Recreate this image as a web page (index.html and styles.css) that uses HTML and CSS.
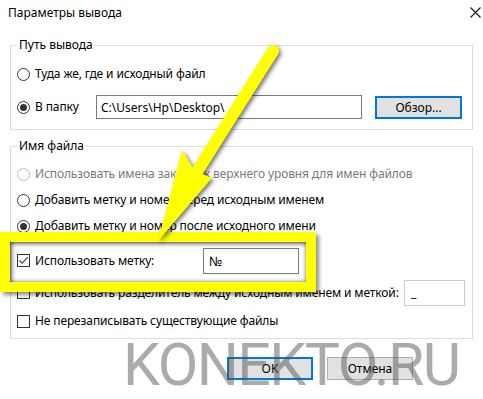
FILE: index.html
```html
<!DOCTYPE html>
<html lang="ru">
<head>
<meta charset="utf-8">
<title>Параметры вывода</title>
<link rel="stylesheet" href="styles.css">
</head>
<body>
<div class="dialog">
  <div class="titlebar">
    <span class="title">Параметры вывода</span>
    <svg class="close" width="11" height="11" viewBox="0 0 11 11"><path d="M0.5 0.5L10.5 10.5M10.5 0.5L0.5 10.5" stroke="#111" stroke-width="1.1" fill="none"/></svg>
  </div>
  <div class="content">
    <fieldset class="group g1">
      <legend>Путь вывода</legend>
      <div class="row r1"><span class="radio"></span><span class="lbl">Туда же, где и исходный файл</span></div>
      <div class="row r2"><span class="radio checked"></span><span class="lbl folder">В папку</span><div class="input path">C:\Users\Hp\Desktop\</div><div class="btn focus browse">Обзор...</div></div>
    </fieldset>
    <fieldset class="group g2">
      <legend>Имя файла</legend>
      <div class="row rr"><span class="radio disabled"></span><span class="lbl dis">Использовать имена закладок верхнего уровня для имен файлов</span></div>
      <div class="row rr"><span class="radio"></span><span class="lbl">Добавить метку и номер перед исходным именем</span></div>
      <div class="row rr"><span class="radio checked"></span><span class="lbl">Добавить метку и номер после исходного имени</span></div>
      <div class="row r4"><span class="check checked"><svg width="11" height="11" viewBox="0 0 11 11"><path d="M1.5 5.5L4.2 8.3L9.8 2.2" stroke="#333" stroke-width="1.1" fill="none"/></svg></span><span class="lbl tag">Использовать метку:</span><div class="input num">№</div></div>
      <div class="row r5"><span class="check"></span><span class="lbl">Использовать разделитель между исходным именем и меткой:</span><div class="input sep">_</div></div>
      <div class="row r6"><span class="check"></span><span class="lbl">Не перезаписывать существующие файлы</span></div>
    </fieldset>
  </div>
  <div class="buttons">
    <div class="btn focus dlg">OK</div>
    <div class="btn dlg">Отмена</div>
  </div>
  <div class="watermark">KONEKTO.RU</div>
  <div class="highlight"></div>
  <svg class="arrow" width="483" height="399" viewBox="0 0 483 399">
    <g class="arrow-shape">
      <line x1="273" y1="51" x2="198" y2="170" stroke="#ffff00" stroke-width="12" stroke-linecap="round"/>
      <polygon points="182,150 195,171 212,178 158,241" fill="#ffff00"/>
    </g>
  </svg>
</div>
</body>
</html>
```
FILE: styles.css
```css
* { box-sizing: border-box; }
html, body { margin: 0; padding: 0; background: #fff; }
body {
  width: 483px; height: 399px; overflow: hidden;
  font-family: "Noto Sans", "Open Sans", sans-serif;
  font-size: 12px; color: #000;
}
.dialog { position: relative; width: 483px; height: 399px; background: #fff; }
.titlebar {
  height: 26px; display: flex; align-items: center; justify-content: space-between;
  padding: 0 2px 0 8px;
}
.title { font-size: 12px; line-height: 16px; }
.close { display: block; margin-top: -1px; }
.content { padding: 11px 10px 0 10px; }
.group {
  margin: 0; border: 1px solid #dcdcdc; padding: 0 6px;
  min-width: 0;
}
.group legend { padding: 0 2px; margin-left: 0; line-height: 16px; font-size: 12px; }
.g1 { padding-top: 11px; padding-bottom: 10px; }
.g2 { margin-top: 8px; padding-top: 7px; padding-bottom: 7px; }
.row { display: flex; align-items: center; }
.r1 { height: 20px; }
.r2 { height: 24px; margin-top: 11px; }
.rr { height: 26px; }
.r4 { height: 25px; margin-top: 9px; }
.r5 { height: 25px; margin-top: 7px; }
.r6 { height: 20px; margin-top: 6px; }
.lbl { margin-left: 5px; white-space: nowrap; line-height: 16px; letter-spacing: -0.12px; }
.lbl.dis { color: #7a7a7a; }
.lbl.folder { width: 61px; }
.lbl.tag { width: 168px; }
.radio {
  width: 13px; height: 13px; border: 1px solid #333; border-radius: 50%;
  display: inline-flex; align-items: center; justify-content: center; flex: none; background: #fff;
}
.radio.checked::after { content: ""; width: 7px; height: 7px; border-radius: 50%; background: #333; }
.radio.disabled { border-color: #bcbcbc; }
.check {
  width: 13px; height: 13px; border: 1px solid #333; flex: none; background: #fff;
  display: inline-flex; align-items: center; justify-content: center;
}
.check svg { display: block; }
.input {
  border: 1px solid #7a7a7a; background: #fff; display: flex; align-items: center;
  padding-left: 4px; white-space: nowrap;
}
.path { width: 266px; height: 24px; }
.num { width: 96px; height: 26px; padding-left: 5px; font-size: 13px; }
.sep { width: 61px; height: 26px; margin-left: auto; margin-right: 1px; border-color: #cccccc; padding-left: 6px; }
.btn {
  background: #e1e1e1; border: 1px solid #adadad; display: flex; align-items: center; justify-content: center;
}
.btn.focus { border: 2px solid #0078d7; }
.browse { width: 87px; height: 23px; margin-left: 13px; }
.buttons { display: flex; justify-content: flex-end; gap: 14px; padding-right: 70px; margin-top: 18px; }
.dlg { width: 86px; height: 23px; }
.watermark {
  position: absolute; left: 123px; top: 330px;
  font-family: Roboto, "Liberation Sans", sans-serif; font-size: 59px; line-height: 70px;
  letter-spacing: -1.5px; color: rgba(80, 80, 80, 0.48); white-space: nowrap;
}
.highlight {
  position: absolute; left: 0; top: 232px; width: 316px; height: 60px;
  border: 10px solid #ffff00;
  box-shadow: inset 1px 1px 5px rgba(0,0,0,0.85), 3px 3px 4px rgba(0,0,0,0.45);
}
.arrow { position: absolute; left: 0; top: 0; pointer-events: none; }
.arrow-shape { filter: drop-shadow(2px 2px 2px rgba(0,0,0,0.55)); }
```
